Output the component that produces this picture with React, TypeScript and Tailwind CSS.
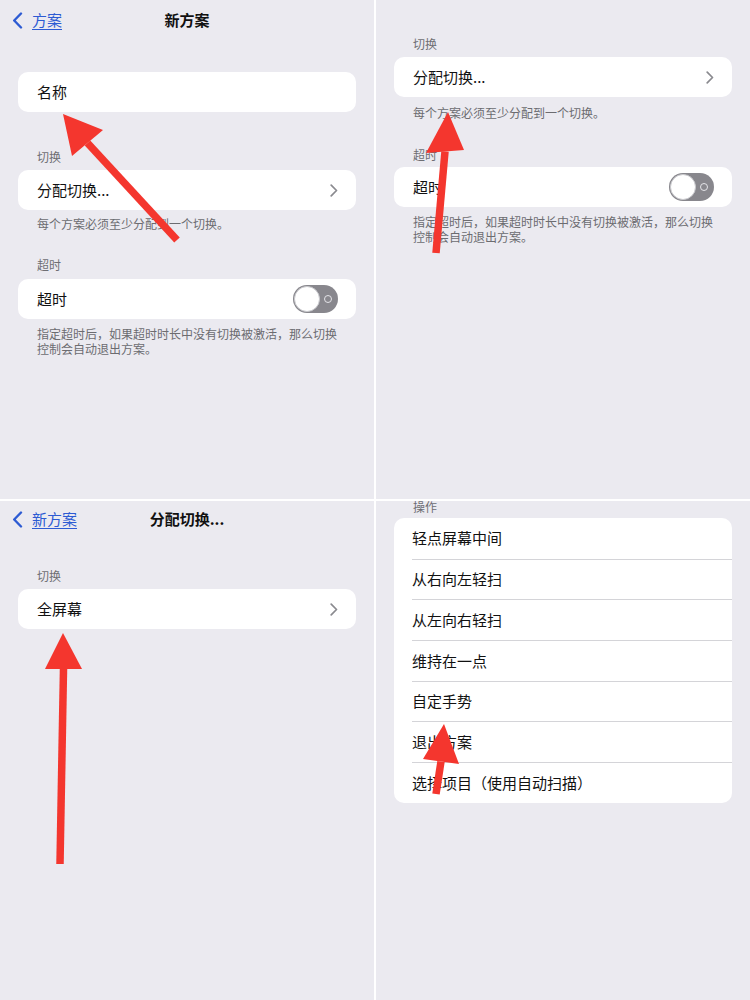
import React from 'react';

const FONT = "font-['Noto_Sans_CJK_SC','Noto_Sans',sans-serif]";

type Pt = [number, number];

// red annotation arrow drawn over a panel
const Arrow = ({ tip, left, right, tail }: { tip: Pt; left: Pt; right: Pt; tail: Pt }) => {
    const base: Pt = [(left[0] + right[0]) / 2, (left[1] + right[1]) / 2];
    return (
        <svg className="pointer-events-none absolute inset-0 h-full w-full" viewBox="0 0 374 499">
            <line x1={tail[0]} y1={tail[1]} x2={base[0]} y2={base[1]} stroke="#f4362e" strokeWidth="7.5" />
            <polygon points={`${tip[0]},${tip[1]} ${left[0]},${left[1]} ${right[0]},${right[1]}`} fill="#f4362e" />
        </svg>
    );
};

const Chevron = () => (
    <svg width="8" height="13" viewBox="0 0 8 13" fill="none">
        <path d="M1.2 1.2l5.3 5.3-5.3 5.3" stroke="#8a8a8f" strokeWidth="1.7" strokeLinecap="round" strokeLinejoin="round" />
    </svg>
);

const NavBar = ({ back, title, height }: { back: string; title: string; height: string }) => (
    <div className={`grid grid-cols-[1fr_auto_1fr] items-center px-[12px] ${height}`}>
        <div className="flex items-center gap-[9px] text-[#2d5bd3]">
            <svg width="11" height="17" viewBox="0 0 11 17" fill="none">
                <path d="M9 1.5L2.2 8.5 9 15.5" stroke="#2d5bd3" strokeWidth="2.4" strokeLinecap="round" strokeLinejoin="round" />
            </svg>
            <span className="text-[15px] leading-[20px] underline underline-offset-[3px]">{back}</span>
        </div>
        <div className="text-[15px] font-semibold leading-[20px] text-[#111]">{title}</div>
        <div />
    </div>
);

const Label = ({ text, className = '' }: { text: string; className?: string }) => (
    <div className={`px-[37px] text-[12px] leading-[16px] text-[#6e6e73] ${className}`}>{text}</div>
);

const Card = ({ children, className = '' }: { children: React.ReactNode; className?: string }) => (
    <div className={`mx-[18px] overflow-hidden rounded-[10px] bg-white ${className}`}>{children}</div>
);

const Row = ({ text, chevron, toggle }: { text: string; chevron?: boolean; toggle?: boolean }) => (
    <div className="flex h-[40px] items-center justify-between pl-[19px] pr-[18px] text-[15px] text-[#111]">
        <span>{text}</span>
        {chevron && <Chevron />}
        {toggle && (
            <div className="flex h-[28px] w-[45px] items-center justify-between rounded-full bg-[#88878d] pl-[1px] pr-[6px]">
                <div className="h-[26px] w-[26px] rounded-full border border-[#c9c9cd] bg-white" />
                <div className="h-[8px] w-[8px] rounded-full border-[1.3px] border-[#e4e4e8]" />
            </div>
        )}
    </div>
);

const Footer = ({ children, className = '' }: { children: React.ReactNode; className?: string }) => (
    <div className={`px-[37px] text-[12px] text-[#6c6c70] ${className}`}>{children}</div>
);

const TimeoutNote = ({ className }: { className: string }) => (
    <Footer className={`leading-[15px] ${className}`}>
        指定超时后，如果超时时长中没有切换被激活，那么切换
        <br />
        控制会自动退出方案。
    </Footer>
);

const Panel = ({ children }: { children: React.ReactNode }) => (
    <div className="relative h-[499px] overflow-hidden bg-[#ebeaf0]">{children}</div>
);

const actions = ['轻点屏幕中间', '从右向左轻扫', '从左向右轻扫', '维持在一点', '自定手势', '退出方案', '选择项目（使用自动扫描）'];

export default function App() {
    return (
        <div className={`grid h-[1000px] w-[750px] grid-cols-2 gap-[2px] bg-white ${FONT}`}>
            {/* new scheme */}
            <Panel>
                <NavBar back="方案" title="新方案" height="h-[40px]" />
                <Card className="mt-[32px]">
                    <Row text="名称" />
                </Card>
                <Label text="切换" className="mt-[37px]" />
                <Card className="mt-[5px]">
                    <Row text="分配切换..." chevron />
                </Card>
                <Footer className="mt-[6px] leading-[16px]">每个方案必须至少分配到一个切换。</Footer>
                <Label text="超时" className="mt-[25px]" />
                <Card className="mt-[6px]">
                    <Row text="超时" toggle />
                </Card>
                <TimeoutNote className="mt-[7px]" />
                <Arrow tip={[63, 114]} left={[72, 156]} right={[103, 130]} tail={[177, 240]} />
            </Panel>

            {/* scrolled */}
            <Panel>
                <Label text="切换" className="mt-[36px]" />
                <Card className="mt-[5px]">
                    <Row text="分配切换..." chevron />
                </Card>
                <Footer className="mt-[8px] leading-[16px]">每个方案必须至少分配到一个切换。</Footer>
                <Label text="超时" className="mt-[26px]" />
                <Card className="mt-[4px]">
                    <Row text="超时" toggle />
                </Card>
                <TimeoutNote className="mt-[7px]" />
                <Arrow tip={[72, 112]} left={[50, 153]} right={[88, 150]} tail={[60, 253]} />
            </Panel>

            {/* assign switch */}
            <Panel>
                <NavBar back="新方案" title="分配切换..." height="h-[36px]" />
                <Label text="切换" className="mt-[31px]" />
                <Card className="mt-[5px]">
                    <Row text="全屏幕" chevron />
                </Card>
                <Arrow tip={[63, 132]} left={[45, 168]} right={[82, 168]} tail={[60, 363]} />
            </Panel>

            {/* actions */}
            <Panel>
                <div className="px-[37px] text-[12px] leading-[12px] text-[#6e6e73]">操作</div>
                <Card className="mt-[5px]">
                    {actions.map((a, i) => (
                        <div
                            key={a}
                            className={`ml-[18px] flex h-[40.7px] items-center text-[15px] text-[#111] ${i > 0 ? 'border-t border-[#d4d4d8]' : ''}`}
                        >
                            {a}
                        </div>
                    ))}
                </Card>
                <Arrow tip={[68, 223]} left={[47, 258]} right={[83, 263]} tail={[60, 293]} />
            </Panel>
        </div>
    );
}
